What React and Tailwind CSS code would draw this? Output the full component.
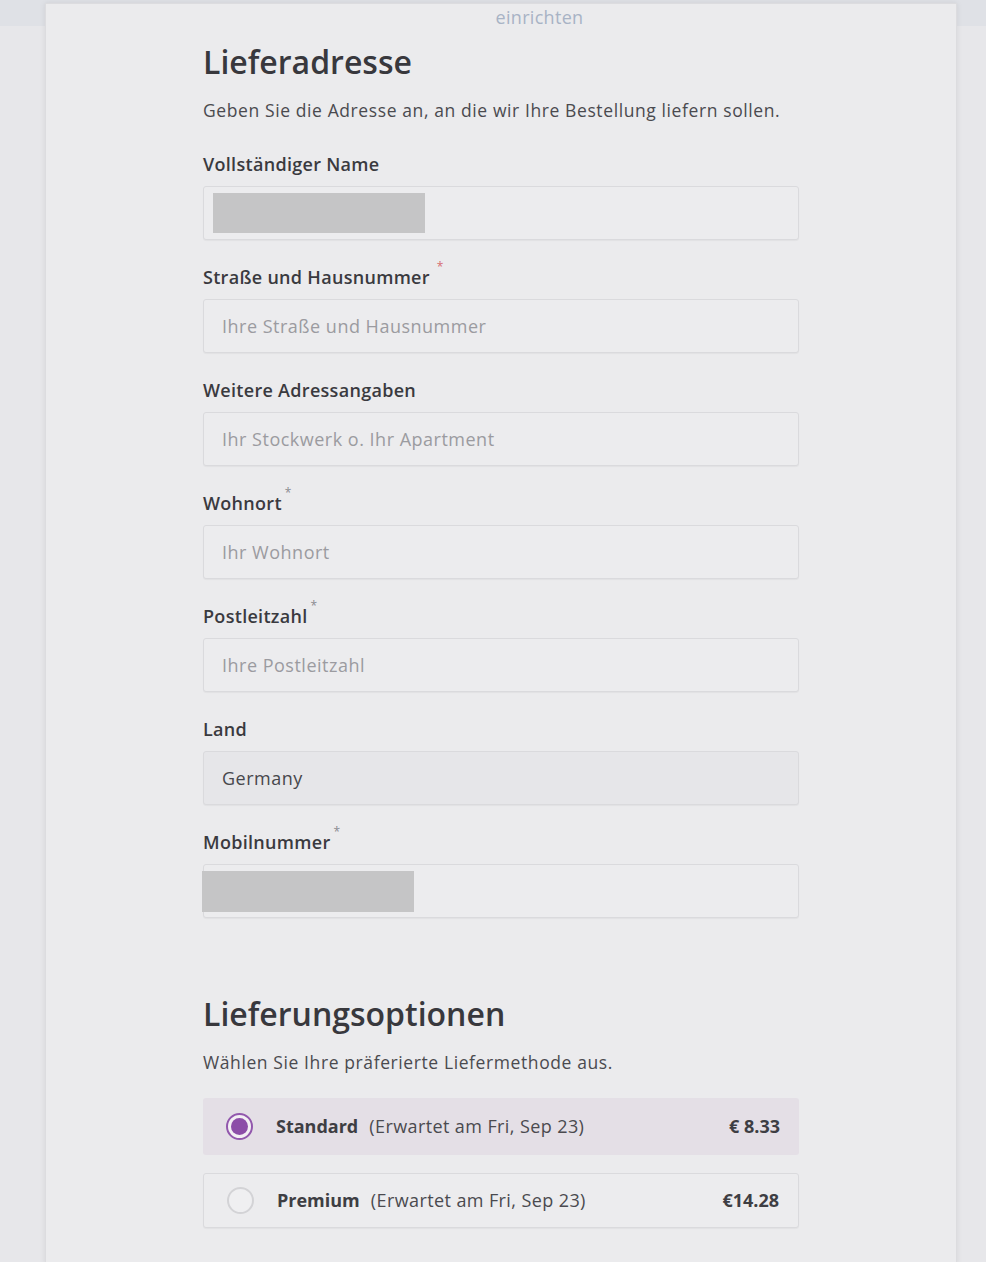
import React from "react";

const fields = [
  { label: "Vollständiger Name", redacted: "w-[212px] ml-[9px] h-[40px]" },
  { label: "Straße und Hausnummer", required: "red", placeholder: "Ihre Straße und Hausnummer" },
  { label: "Weitere Adressangaben", placeholder: "Ihr Stockwerk o. Ihr Apartment" },
  { label: "Wohnort", required: "gray", placeholder: "Ihr Wohnort" },
  { label: "Postleitzahl", required: "gray", placeholder: "Ihre Postleitzahl" },
  { label: "Land", value: "Germany" },
  { label: "Mobilnummer", required: "gray", redacted: "w-[212px] -ml-[2px] h-[41px]" },
];

function Field({ field }) {
  return (
    <div className="mb-[26px]">
      <div className="flex items-start h-[22px] mb-[11px]">
        <span className="text-[18px] leading-[22px] font-semibold text-[#3a3a3f] tracking-[0.3px]">
          {field.label}
        </span>
        {field.required && (
          <span
            className={
              field.required === "red"
                ? "ml-[7px] -mt-[6px] text-[12px] leading-[14px] text-[#d66b72]"
                : "ml-[3px] -mt-[6px] text-[12px] leading-[14px] text-[#8a8a90]"
            }
          >
            *
          </span>
        )}
      </div>
      <div
        className={
          "h-[54px] rounded-[3px] border border-[#dadadd] flex items-center shadow-[0_1px_1px_rgba(0,0,0,0.04)] " +
          (field.value ? "bg-[#e6e6e9]" : "bg-[#ececee]")
        }
      >
        {field.redacted ? (
          <div className={"bg-[#c5c5c6] " + field.redacted} />
        ) : field.value ? (
          <span className="pl-[18px] text-[18px] text-[#47474c] tracking-[0.5px]">{field.value}</span>
        ) : (
          <span className="pl-[18px] text-[18px] text-[#9b9ba0] tracking-[0.5px]">{field.placeholder}</span>
        )}
      </div>
    </div>
  );
}

function Option({ selected, name, price }) {
  return (
    <div
      className={
        "rounded-[3px] flex items-center pl-[23px] pr-[19px] " +
        (selected
          ? "h-[57px] bg-[#e4dfe6]"
          : "h-[55px] bg-[#ececee] border border-[#dadadd] shadow-[0_1px_1px_rgba(0,0,0,0.04)]")
      }
    >
      {selected ? (
        <span className="w-[27px] h-[27px] rounded-full border-2 border-[#9258ad] bg-[#f3eff4] flex items-center justify-center">
          <span className="w-[17px] h-[17px] rounded-full bg-[#8c4ea8]" />
        </span>
      ) : (
        <span className="w-[27px] h-[27px] rounded-full border-2 border-[#d3d3d6] bg-[#efeff1]" />
      )}
      <span className="ml-[23px] text-[18px] font-bold text-[#3e3e43]">{name}</span>
      <span className="ml-[11px] text-[18px] text-[#4a4a4f] tracking-[0.4px]">(Erwartet am Fri, Sep 23)</span>
      <span className="ml-auto text-[18px] font-bold text-[#3e3e43]">{price}</span>
    </div>
  );
}

export default function App() {
  return (
    <div
      className="min-h-[1262px] bg-[#e7e7ea] overflow-hidden"
      style={{ fontFamily: "'Open Sans', Lato, sans-serif" }}
    >
      <div className="h-[26px] bg-[#dfe1e6]" />
      <div className="ml-[45px] w-[912px] -mt-[23px] min-h-[1262px] bg-[#ebebed] border-x border-t border-[#dcdcdf] shadow-[0_0_6px_rgba(0,0,0,0.08)]">
        <div className="text-center text-[18px] leading-[24px] pt-[1px] text-[#a8b3c5] pl-[77px] tracking-[0.3px]">einrichten</div>
        <div className="px-[157px]">
          <h1 className="mt-[14px] text-[32px] leading-[38px] font-semibold text-[#38383d]">
            Lieferadresse
          </h1>
          <p className="mt-[17px] text-[17.5px] leading-[24px] text-[#4a4a4f] tracking-[0.6px]">
            Geben Sie die Adresse an, an die wir Ihre Bestellung liefern sollen.
          </p>
          <div className="mt-[31px]">
            {fields.map((f) => (
              <Field key={f.label} field={f} />
            ))}
          </div>
          <h2 className="mt-[77px] text-[32px] leading-[38px] font-semibold text-[#38383d]">
            Lieferungsoptionen
          </h2>
          <p className="mt-[17px] text-[17.5px] leading-[24px] text-[#4a4a4f] tracking-[0.6px]">
            Wählen Sie Ihre präferierte Liefermethode aus.
          </p>
          <div className="mt-[24px] flex flex-col gap-[18px]">
            <Option selected name="Standard" price="€ 8.33" />
            <Option name="Premium" price="€14.28" />
          </div>
        </div>
      </div>
    </div>
  );
}
